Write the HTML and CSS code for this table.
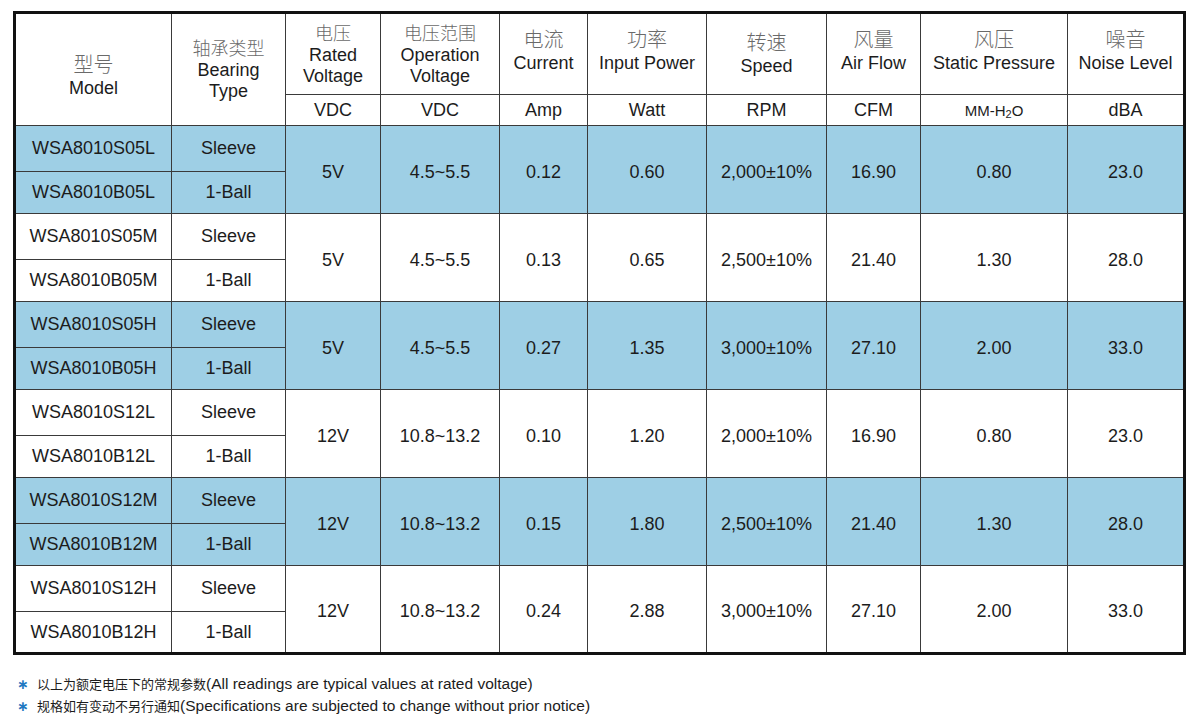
FILE: index.html
```html
<!DOCTYPE html>
<html lang="zh">
<head>
<meta charset="utf-8">
<title>WSA8010 Specifications</title>
<link rel="stylesheet" href="styles.css">
</head>
<body>
<div class="page">
<table class="spec">
  <colgroup>
    <col class="c1"><col class="c2"><col class="c3"><col class="c4"><col class="c5">
    <col class="c6"><col class="c7"><col class="c8"><col class="c9"><col class="c10">
  </colgroup>
  <thead>
    <tr class="h1">
      <th rowspan="2" class="two tall"><span class="zh">型号</span><span class="en">Model</span></th>
      <th rowspan="2" class="three"><span class="zh">轴承类型</span><span class="en">Bearing<br>Type</span></th>
      <th class="three"><span class="zh">电压</span><span class="en">Rated<br>Voltage</span></th>
      <th class="three"><span class="zh">电压范围</span><span class="en">Operation<br>Voltage</span></th>
      <th class="two"><span class="zh">电流</span><span class="en">Current</span></th>
      <th class="two"><span class="zh">功率</span><span class="en">Input Power</span></th>
      <th class="two low"><span class="zh">转速</span><span class="en">Speed</span></th>
      <th class="two"><span class="zh">风量</span><span class="en">Air Flow</span></th>
      <th class="two"><span class="zh">风压</span><span class="en">Static Pressure</span></th>
      <th class="two"><span class="zh">噪音</span><span class="en">Noise Level</span></th>
    </tr>
    <tr class="h2">
      <th>VDC</th><th>VDC</th><th>Amp</th><th>Watt</th><th>RPM</th><th>CFM</th>
      <th class="small">MM-H<sub>2</sub>O</th><th>dBA</th>
    </tr>
  </thead>
  <tbody class="blue">
    <tr class="ra"><td>WSA8010S05L</td><td>Sleeve</td><td rowspan="2" class="m">5V</td><td rowspan="2" class="m">4.5~5.5</td><td rowspan="2" class="m">0.12</td><td rowspan="2" class="m">0.60</td><td rowspan="2" class="m">2,000±10%</td><td rowspan="2" class="m">16.90</td><td rowspan="2" class="m">0.80</td><td rowspan="2" class="m">23.0</td></tr>
    <tr class="rb"><td>WSA8010B05L</td><td>1-Ball</td></tr>
  </tbody>
  <tbody>
    <tr class="ra"><td>WSA8010S05M</td><td>Sleeve</td><td rowspan="2" class="m">5V</td><td rowspan="2" class="m">4.5~5.5</td><td rowspan="2" class="m">0.13</td><td rowspan="2" class="m">0.65</td><td rowspan="2" class="m">2,500±10%</td><td rowspan="2" class="m">21.40</td><td rowspan="2" class="m">1.30</td><td rowspan="2" class="m">28.0</td></tr>
    <tr class="rb"><td>WSA8010B05M</td><td>1-Ball</td></tr>
  </tbody>
  <tbody class="blue">
    <tr class="ra"><td>WSA8010S05H</td><td>Sleeve</td><td rowspan="2" class="m">5V</td><td rowspan="2" class="m">4.5~5.5</td><td rowspan="2" class="m">0.27</td><td rowspan="2" class="m">1.35</td><td rowspan="2" class="m">3,000±10%</td><td rowspan="2" class="m">27.10</td><td rowspan="2" class="m">2.00</td><td rowspan="2" class="m">33.0</td></tr>
    <tr class="rb"><td>WSA8010B05H</td><td>1-Ball</td></tr>
  </tbody>
  <tbody>
    <tr class="ra"><td>WSA8010S12L</td><td>Sleeve</td><td rowspan="2" class="m">12V</td><td rowspan="2" class="m">10.8~13.2</td><td rowspan="2" class="m">0.10</td><td rowspan="2" class="m">1.20</td><td rowspan="2" class="m">2,000±10%</td><td rowspan="2" class="m">16.90</td><td rowspan="2" class="m">0.80</td><td rowspan="2" class="m">23.0</td></tr>
    <tr class="rb"><td>WSA8010B12L</td><td>1-Ball</td></tr>
  </tbody>
  <tbody class="blue">
    <tr class="ra"><td>WSA8010S12M</td><td>Sleeve</td><td rowspan="2" class="m">12V</td><td rowspan="2" class="m">10.8~13.2</td><td rowspan="2" class="m">0.15</td><td rowspan="2" class="m">1.80</td><td rowspan="2" class="m">2,500±10%</td><td rowspan="2" class="m">21.40</td><td rowspan="2" class="m">1.30</td><td rowspan="2" class="m">28.0</td></tr>
    <tr class="rb"><td>WSA8010B12M</td><td>1-Ball</td></tr>
  </tbody>
  <tbody>
    <tr class="ra"><td>WSA8010S12H</td><td>Sleeve</td><td rowspan="2" class="m">12V</td><td rowspan="2" class="m">10.8~13.2</td><td rowspan="2" class="m">0.24</td><td rowspan="2" class="m">2.88</td><td rowspan="2" class="m">3,000±10%</td><td rowspan="2" class="m">27.10</td><td rowspan="2" class="m">2.00</td><td rowspan="2" class="m">33.0</td></tr>
    <tr class="rb"><td>WSA8010B12H</td><td>1-Ball</td></tr>
  </tbody>
</table>
<ul class="notes">
  <li><span class="star">∗</span><span class="cn">以上为额定电压下的常规参数</span>(All readings are typical values at rated voltage)</li>
  <li><span class="star">∗</span><span class="cn">规格如有变动不另行通知</span>(Specifications are subjected to change without prior notice)</li>
</ul>
</div>
</body>
</html>
```

FILE: styles.css
```css
html, body {
  margin: 0;
  padding: 0;
  background: #ffffff;
}

body {
  font-family: "Liberation Sans", Arial, sans-serif;
  color: #1c1c1c;
}

.page {
  padding: 11px 0 0 13px;
}

.spec {
  border-collapse: collapse;
  table-layout: fixed;
  width: 1172px;
  border: 3px solid #111111;
}

.c1 { width: 157px; }
.c2 { width: 114px; }
.c3 { width: 95px; }
.c4 { width: 119px; }
.c5 { width: 88px; }
.c6 { width: 119px; }
.c7 { width: 120px; }
.c8 { width: 94px; }
.c9 { width: 147px; }
.c10 { width: 117px; }

.spec th,
.spec td {
  border: 1px solid #3a3a3a;
  padding: 0;
  text-align: center;
  vertical-align: middle;
  font-size: 18px;
  font-weight: normal;
  line-height: 21px;
  color: #1c1c1c;
}

.spec .h1 { height: 82px; }
.spec .h2 { height: 31px; }
.spec .ra { height: 46px; }
.spec .rb { height: 42px; }

.spec .zh {
  display: block;
  font-family: "Noto Sans CJK SC", sans-serif;
  font-size: 20px;
  line-height: 22px;
  color: #6a6a6a;
  font-weight: 300;
}

.spec .en {
  display: block;
}

.spec .two .zh {
  margin-bottom: 3px;
}

.spec .two {
  padding-bottom: 6px;
}

.spec .two.low {
  padding-bottom: 0;
}

.spec .two.tall {
  padding-top: 12px;
  padding-bottom: 0;
}

.spec .three .zh {
  font-size: 18px;
  line-height: 21px;
  margin-bottom: 2px;
}

.spec td.m {
  padding-top: 5px;
}

.spec .small {
  font-size: 15px;
}

.spec sub {
  font-size: 11px;
  line-height: 0;
  vertical-align: -2px;
}

.blue td {
  background: #9ecfe5;
}

.notes {
  list-style: none;
  margin: 18px 0 0 0;
  padding: 0;
  font-size: 15.5px;
  line-height: 21px;
  color: #1c1c1c;
}

.notes li {
  display: flex;
  align-items: baseline;
}

.notes .star {
  width: 20px;
  padding-left: 4px;
  color: #1f78c1;
  font-family: "DejaVu Sans", sans-serif;
  font-size: 14px;
  font-weight: bold;
}

.notes .cn {
  font-family: "Noto Sans CJK SC", sans-serif;
  font-size: 13px;
}
```
